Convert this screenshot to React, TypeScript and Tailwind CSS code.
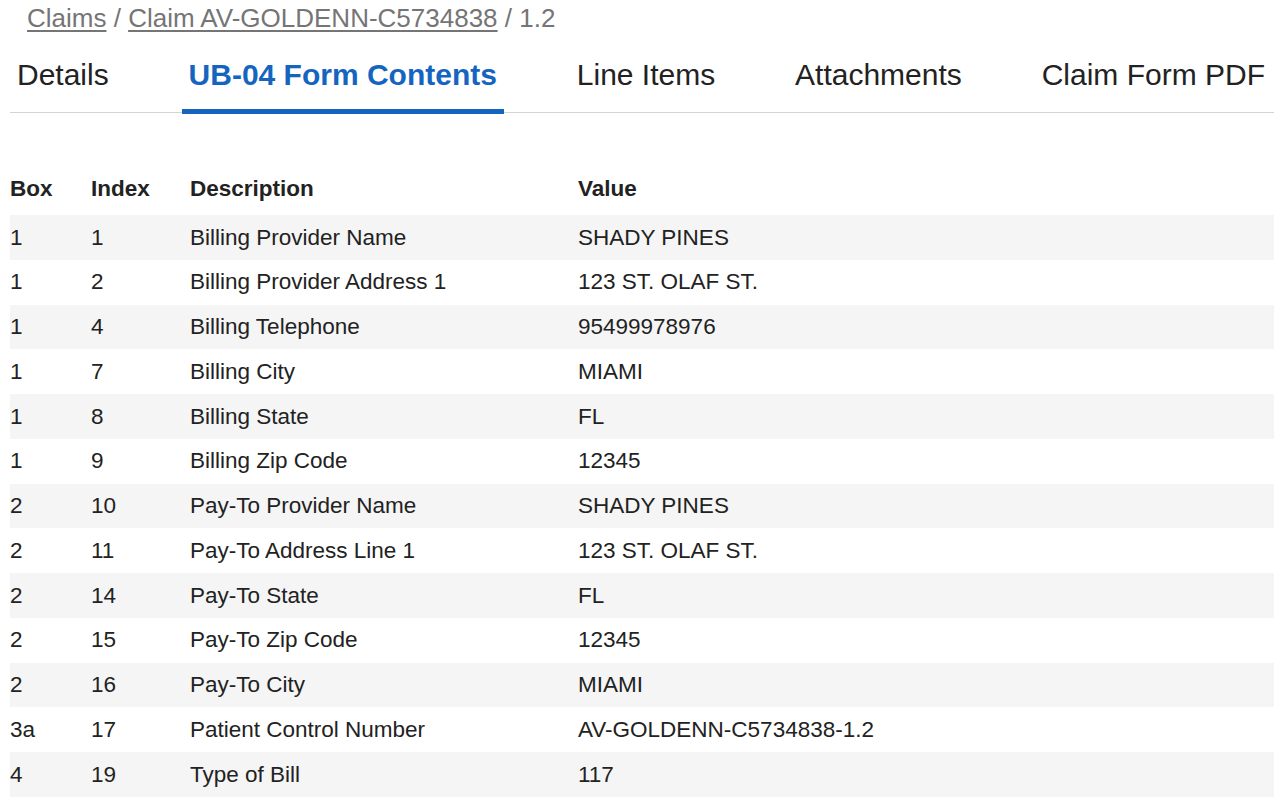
import React from "react";

type Row = {
  box: string;
  index: string;
  description: string;
  value: string;
};

const tabs = ["Details", "UB-04 Form Contents", "Line Items", "Attachments", "Claim Form PDF"];

const rows: Row[] = [
  { box: "1", index: "1", description: "Billing Provider Name", value: "SHADY PINES" },
  { box: "1", index: "2", description: "Billing Provider Address 1", value: "123 ST. OLAF ST." },
  { box: "1", index: "4", description: "Billing Telephone", value: "95499978976" },
  { box: "1", index: "7", description: "Billing City", value: "MIAMI" },
  { box: "1", index: "8", description: "Billing State", value: "FL" },
  { box: "1", index: "9", description: "Billing Zip Code", value: "12345" },
  { box: "2", index: "10", description: "Pay-To Provider Name", value: "SHADY PINES" },
  { box: "2", index: "11", description: "Pay-To Address Line 1", value: "123 ST. OLAF ST." },
  { box: "2", index: "14", description: "Pay-To State", value: "FL" },
  { box: "2", index: "15", description: "Pay-To Zip Code", value: "12345" },
  { box: "2", index: "16", description: "Pay-To City", value: "MIAMI" },
  { box: "3a", index: "17", description: "Patient Control Number", value: "AV-GOLDENN-C5734838-1.2" },
  { box: "4", index: "19", description: "Type of Bill", value: "117" },
];

export default function App() {
  const activeTab = "UB-04 Form Contents";

  return (
    <div className="min-h-screen bg-white pl-[10px] font-['Liberation_Sans',Arial,sans-serif] text-[#222]">
      {/* breadcrumb */}
      <div className="flex h-[36px] items-center pl-[17px] text-[26px] text-[#757575]">
        <a href="#" className="underline underline-offset-[3px]">
          Claims
        </a>
        <span className="whitespace-pre"> / </span>
        <a href="#" className="underline underline-offset-[3px]">
          Claim AV-GOLDENN-C5734838
        </a>
        <span className="whitespace-pre"> / 1.2</span>
      </div>

      {/* tabs */}
      <nav className="flex items-center justify-between border-b border-[#cfd6d6] pr-[2px]">
        {tabs.map((tab) => {
          const active = tab === activeTab;
          return (
            <button
              key={tab}
              className={
                active
                  ? "relative flex h-[76px] items-center px-[7px] text-[30px] font-bold text-[#1565c0]"
                  : "relative flex h-[76px] items-center px-[7px] text-[30px] text-[#222]"
              }>
              {tab}
              {active && <span className="absolute right-0 bottom-[-2px] left-0 h-[5px] bg-[#1565c0]" />}
            </button>
          );
        })}
      </nav>

      {/* form contents table */}
      <div className="mt-[53px] text-[22.5px]">
        <div className="grid h-[49px] grid-cols-[81px_99px_388px_1fr] items-center pb-[4px] font-bold">
          <div>Box</div>
          <div>Index</div>
          <div>Description</div>
          <div>Value</div>
        </div>
        {rows.map((row, i) => (
          <div
            key={row.index}
            className={
              i % 2 === 0
                ? "grid h-[44.75px] grid-cols-[81px_99px_388px_1fr] items-center bg-[#f5f5f5]"
                : "grid h-[44.75px] grid-cols-[81px_99px_388px_1fr] items-center"
            }>
            <div>{row.box}</div>
            <div>{row.index}</div>
            <div>{row.description}</div>
            <div>{row.value}</div>
          </div>
        ))}
      </div>
    </div>
  );
}
